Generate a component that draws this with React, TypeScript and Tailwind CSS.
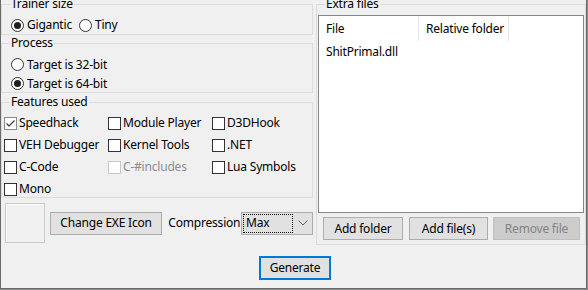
import React from "react";

function Radio({ checked }: { checked?: boolean }) {
  return (
    <span className="w-[13px] h-[13px] rounded-full border border-[#333333] bg-white flex items-center justify-center shrink-0">
      {checked && <span className="w-[7px] h-[7px] rounded-full bg-[#1f1f1f]" />}
    </span>
  );
}

function Check({ checked, disabled }: { checked?: boolean; disabled?: boolean }) {
  return (
    <span
      className={
        "w-[13px] h-[13px] border bg-white flex items-center justify-center shrink-0 " +
        (disabled ? "border-[#c6c6c6]" : checked ? "border-[#8a8a8a]" : "border-[#333333]")
      }
    >
      {checked && (
        <svg width="11" height="11" viewBox="0 0 11 11">
          <path d="M1.5 5.5 L4 8 L9.5 2.5" fill="none" stroke="#333333" strokeWidth="1.1" />
        </svg>
      )}
    </span>
  );
}

function Caption({ children }: { children: React.ReactNode }) {
  return (
    <span className="absolute -top-[9px] left-[8px] px-[1px] bg-[#f0f0f0] leading-[16px] whitespace-nowrap">
      {children}
    </span>
  );
}

function CheckItem({ label, checked, disabled }: { label: string; checked?: boolean; disabled?: boolean }) {
  return (
    <div className="flex items-center h-[22px]">
      <Check checked={checked} disabled={disabled} />
      <span className={"ml-[2px] whitespace-nowrap " + (disabled ? "text-[#8d8d8d]" : "")}>{label}</span>
    </div>
  );
}

export default function App() {
  return (
    <div className="w-[588px] h-[290px] bg-[#8c8c8c] overflow-hidden font-['Noto_Sans','Liberation_Sans',sans-serif] text-[12px] leading-[16px] text-black tracking-[-0.2px]">
      <div className="w-[587px] h-[289px] bg-[#f0f0f0] border-l border-r border-b border-[#6a6a6a] flex flex-col">
        <div className="flex h-[245px]">
          {/* Left column */}
          <div className="w-[312px] flex flex-col">
            {/* Trainer size */}
            <div className="relative mt-[4px] h-[31px] border border-[#dcdcdc] pt-[12px] pl-[9px]">
              <Caption>Trainer size</Caption>
              <div className="flex items-center h-[16px]">
                <div className="flex items-center w-[68px]">
                  <Radio checked />
                  <span className="ml-[3px]">Gigantic</span>
                </div>
                <div className="flex items-center">
                  <Radio />
                  <span className="ml-[3px]">Tiny</span>
                </div>
              </div>
            </div>
            {/* Process */}
            <div className="relative mt-[8px] h-[50px] border border-[#dcdcdc] pt-[11px] pl-[9px]">
              <Caption>Process</Caption>
              <div className="flex items-center h-[19px]">
                <Radio />
                <span className="ml-[3px]">Target is 32-bit</span>
              </div>
              <div className="flex items-center h-[19px]">
                <Radio checked />
                <span className="ml-[3px]">Target is 64-bit</span>
              </div>
            </div>
            {/* Features used */}
            <div className="relative mt-[9px] h-[96px] border border-[#dcdcdc] pt-[9px] pl-[2px]">
              <Caption>Features used</Caption>
              <div className="grid grid-cols-[104px_104px_104px]">
                <CheckItem label="Speedhack" checked />
                <CheckItem label="Module Player" />
                <CheckItem label="D3DHook" />
                <CheckItem label="VEH Debugger" />
                <CheckItem label="Kernel Tools" />
                <CheckItem label=".NET" />
                <CheckItem label="C-Code" />
                <CheckItem label="C-#includes" disabled />
                <CheckItem label="Lua Symbols" />
                <CheckItem label="Mono" />
              </div>
            </div>
            {/* Icon row */}
            <div className="flex items-center mt-[5px]">
              <div className="ml-[4px] w-[40px] h-[40px] border border-[#cacaca] bg-[#f0f0f0] shadow-[inset_1px_1px_0_#ffffff]" />
              <div className="ml-[5px] w-[113px] h-[23px] bg-[#e1e1e1] border border-[#adadad] flex items-center justify-center whitespace-nowrap">
                Change EXE Icon
              </div>
              <div className="w-[79px] pl-[6px] whitespace-nowrap">Compression</div>
              <div className="relative w-[72px] h-[23px] bg-[#e1e1e1] border border-[#adadad] flex items-center shrink-0">
                <div className="ml-[1px] w-[50px] h-[19px] border border-dotted border-black flex items-center pl-[2px]">
                  Max
                </div>
                <svg className="ml-[5px]" width="10" height="6" viewBox="0 0 10 6">
                  <path d="M0.5 0.5 L5 5 L9.5 0.5" fill="none" stroke="#606060" strokeWidth="1" />
                </svg>
              </div>
            </div>
          </div>
          {/* Extra files */}
          <div className="relative ml-[3px] mt-[4px] w-[270px] h-[241px] border border-[#dcdcdc] flex flex-col">
            <Caption>Extra files</Caption>
            <div className="mt-[10px] mx-[1px] h-[198px] border border-[#828790] bg-white flex flex-col">
              <div className="flex h-[25px]">
                <div className="w-[100px] pl-[7px] flex items-center border-r border-[#e5e5e5]">File</div>
                <div className="w-[90px] pl-[7px] flex items-center border-r border-[#e5e5e5] whitespace-nowrap">Relative folder</div>
              </div>
              <div className="mt-[3px] h-[16px] pl-[7px] flex items-center">ShitPrimal.dll</div>
            </div>
            <div className="flex mt-[4px] pl-[6px]">
              <div className="w-[80px] h-[23px] bg-[#e1e1e1] border border-[#adadad] flex items-center justify-center whitespace-nowrap">
                Add folder
              </div>
              <div className="ml-[6px] w-[79px] h-[23px] bg-[#e1e1e1] border border-[#adadad] flex items-center justify-center whitespace-nowrap">
                Add file(s)
              </div>
              <div className="ml-[5px] w-[87px] h-[23px] bg-[#cccccc] border border-[#bfbfbf] text-[#838383] flex items-center justify-center whitespace-nowrap">
                Remove file
              </div>
            </div>
          </div>
        </div>
        <div className="mt-[11px] ml-[258px] w-[72px] h-[24px] bg-[#e1e1e1] border-2 border-[#0078d7] flex items-center justify-center">
          Generate
        </div>
      </div>
    </div>
  );
}
